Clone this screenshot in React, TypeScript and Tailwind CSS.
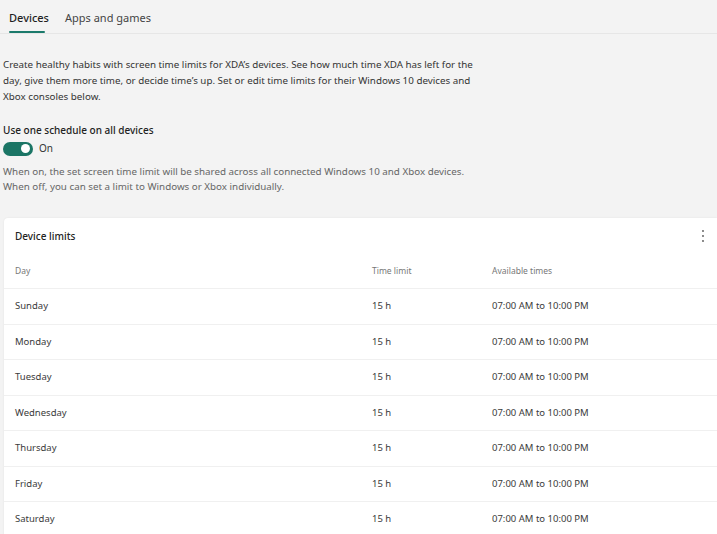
import React from "react";

const days = ["Sunday", "Monday", "Tuesday", "Wednesday", "Thursday", "Friday", "Saturday"];

export default function App() {
  return (
    <div
      className="w-[717px] h-[534px] overflow-hidden bg-[#f3f3f3] text-[#1f1f1f]"
      style={{ fontFamily: '"Noto Sans", "Open Sans", sans-serif' }}
    >
      {/* Tabs */}
      <div className="flex items-end gap-[16px] pl-[9px] h-[34px] border-b border-[#e6e6e6]">
        <div className="flex flex-col">
          <span className="text-[11px] leading-[14px] font-medium text-[#1f1f1f]">Devices</span>
          <div className="mt-[6px] h-[2px] w-[36px] rounded-full bg-[#1b7a6b]" />
        </div>
        <span className="text-[11px] leading-[14px] text-[#444] mb-[8px]">Apps and games</span>
      </div>

      {/* Intro */}
      <div className="px-[3px] pt-[23px]">
        <p className="text-[9.8px] leading-[16px] text-[#333] w-[480px]">
          Create healthy habits with screen time limits for XDA’s devices. See how much time XDA has left for the
          day, give them more time, or decide time’s up. Set or edit time limits for their Windows 10 devices and
          Xbox consoles below.
        </p>

        <p className="mt-[18px] text-[10px] leading-[14px] font-medium text-[#222]">
          Use one schedule on all devices
        </p>
        <div className="mt-[4px] flex items-center gap-[6px]">
          <div className="w-[30px] h-[14px] rounded-full bg-[#1b7565] flex items-center justify-end pr-[3px]">
            <div className="w-[9px] h-[9px] rounded-full bg-white" />
          </div>
          <span className="text-[10px] text-[#333]">On</span>
        </div>

        <p className="mt-[8px] text-[9.8px] leading-[15px] text-[#666]">
          When on, the set screen time limit will be shared across all connected Windows 10 and Xbox devices.
          <br />
          When off, you can set a limit to Windows or Xbox individually.
        </p>
      </div>

      {/* Card */}
      <div className="ml-[4px] mt-[24px] bg-white rounded-l-[4px] shadow-[0_0_2px_rgba(0,0,0,0.08)]">
        <div className="flex items-center justify-between pl-[11px] pr-[12px] h-[37px]">
          <span className="text-[10px] font-medium text-[#222]">Device limits</span>
          <svg width="4" height="14" viewBox="0 0 4 14" className="text-[#555] -mt-[2px]">
            <circle cx="2" cy="2" r="0.9" fill="currentColor" />
            <circle cx="2" cy="7" r="0.9" fill="currentColor" />
            <circle cx="2" cy="12" r="0.9" fill="currentColor" />
          </svg>
        </div>
        <div className="grid grid-cols-[357px_120px_1fr] items-center pl-[11px] h-[34px] border-b border-[#f0f0f0] text-[8.5px] text-[#777]">
          <span>Day</span>
          <span>Time limit</span>
          <span>Available times</span>
        </div>
        {days.map((d) => (
          <div
            key={d}
            className="grid grid-cols-[357px_120px_1fr] items-center pl-[11px] h-[35.5px] border-b border-[#f0f0f0] text-[9.5px] text-[#3a3a3a]"
          >
            <span>{d}</span>
            <span>15 h</span>
            <span>07:00 AM to 10:00 PM</span>
          </div>
        ))}
      </div>
    </div>
  );
}
